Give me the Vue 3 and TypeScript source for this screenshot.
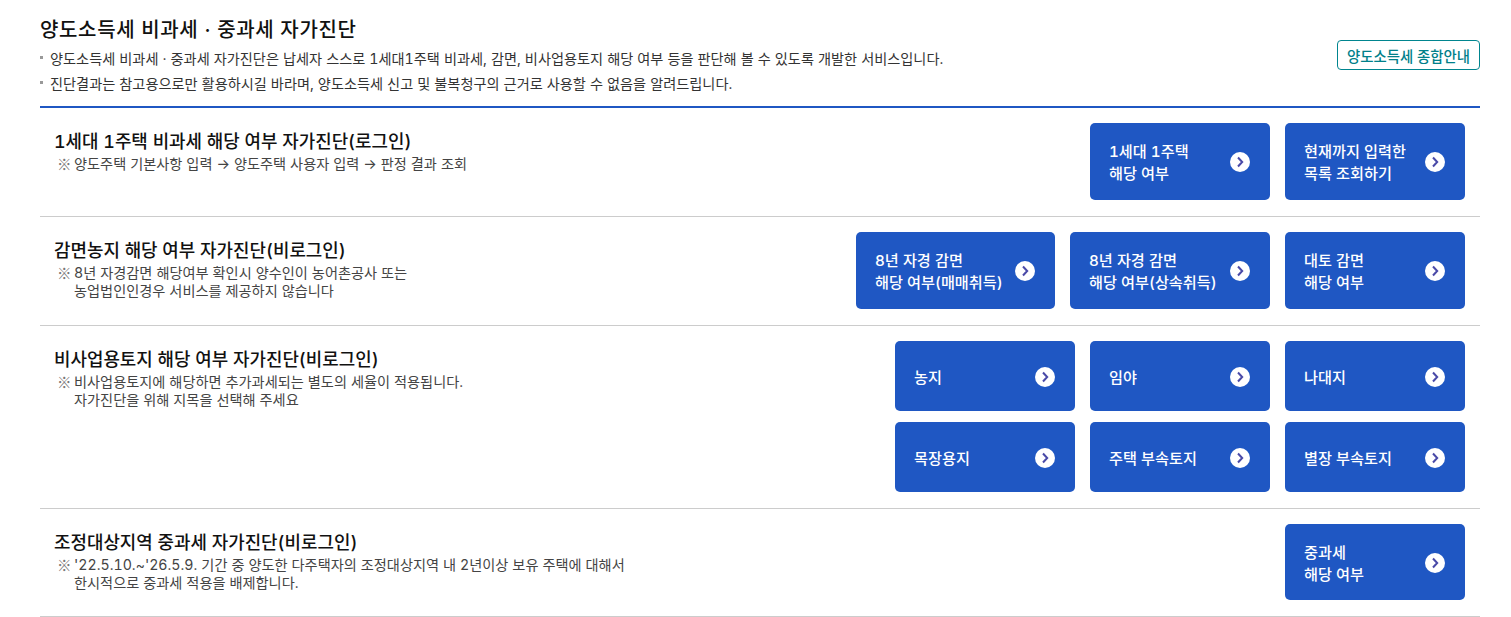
<template>
  <div class="page">
    <header class="head">
      <div class="intro">
        <h1>양도소득세 비과세 · 중과세 자가진단</h1>
        <ul>
          <li v-for="line in notices" :key="line">{{ line }}</li>
        </ul>
      </div>
      <a class="guide">양도소득세 종합안내</a>
    </header>
    <section v-for="sec in sections" :key="sec.title" class="row">
      <div class="info">
        <h2>{{ sec.title }}</h2>
        <p>{{ sec.desc }}</p>
      </div>
      <div class="btns" :class="sec.cls">
        <a v-for="b in sec.buttons" :key="b" class="btn">
          <span>{{ b }}</span>
          <svg width="20" height="20" viewBox="0 0 20 20">
            <circle cx="10" cy="10" r="10" fill="#fff" />
            <path d="M8 5.5 L12.2 10 L8 14.5" fill="none" stroke="#4a4aa8" stroke-width="2" />
          </svg>
        </a>
      </div>
    </section>
  </div>
</template>

<script setup lang="ts">
interface Section {
  title: string;
  desc: string;
  buttons: string[];
  cls?: string;
}

const notices = [
  '양도소득세 비과세 · 중과세 자가진단은 납세자 스스로 1세대1주택 비과세, 감면, 비사업용토지 해당 여부 등을 판단해 볼 수 있도록 개발한 서비스입니다.',
  '진단결과는 참고용으로만 활용하시길 바라며, 양도소득세 신고 및 불복청구의 근거로 사용할 수 없음을 알려드립니다.',
];

const sections: Section[] = [
  {
    title: '1세대 1주택 비과세 해당 여부 자가진단(로그인)',
    desc: '양도주택 기본사항 입력 → 양도주택 사용자 입력 → 판정 결과 조회',
    buttons: ['1세대 1주택\n해당 여부', '현재까지 입력한\n목록 조회하기'],
  },
  {
    title: '감면농지 해당 여부 자가진단(비로그인)',
    desc: '8년 자경감면 해당여부 확인시 양수인이 농어촌공사 또는\n농업법인인경우 서비스를 제공하지 않습니다',
    buttons: ['8년 자경 감면\n해당 여부(매매취득)', '8년 자경 감면\n해당 여부(상속취득)', '대토 감면\n해당 여부'],
    cls: 'wide',
  },
  {
    title: '비사업용토지 해당 여부 자가진단(비로그인)',
    desc: '비사업용토지에 해당하면 추가과세되는 별도의 세율이 적용됩니다.\n자가진단을 위해 지목을 선택해 주세요',
    buttons: ['농지', '임야', '나대지', '목장용지', '주택 부속토지', '별장 부속토지'],
    cls: 'grid',
  },
  {
    title: '조정대상지역 중과세 자가진단(비로그인)',
    desc: "'22.5.10.~'26.5.9. 기간 중 양도한 다주택자의 조정대상지역 내 2년이상 보유 주택에 대해서\n한시적으로 중과세 적용을 배제합니다.",
    buttons: ['중과세\n해당 여부'],
    cls: 'last',
  },
];
</script>

<style>
html, body {
  background: #fff;
}
</style>

<style scoped>
.page {
  width: 1440px;
  margin-left: 40px;
  font-family: Inter, "Noto Sans CJK KR", sans-serif;
  font-feature-settings: "tnum";
  color: #111;
}

.head {
  display: flex;
  justify-content: space-between;
  align-items: center;
  box-sizing: border-box;
  border-bottom: 2px solid #1f57c3;
  height: 108px;
}

.intro {
  align-self: flex-start;
  padding-top: 15px;
}

h1 {
  margin: 0 0 1px;
  font-size: 20px;
  line-height: 30px;
  font-weight: 500;
  letter-spacing: 0.65px;
}

ul {
  margin: 0;
  padding: 0;
  list-style: none;
}

li {
  position: relative;
  padding-left: 10px;
  font-size: 14.2px;
  line-height: 25px;
  word-spacing: 0.2px;
  color: #333;
}

li::before {
  content: "";
  position: absolute;
  left: 0;
  top: 10px;
  width: 3px;
  height: 3px;
  background: #999;
}

.guide {
  display: flex;
  align-items: center;
  justify-content: center;
  width: 143px;
  height: 30px;
  box-sizing: border-box;
  border: 1px solid #00858f;
  border-radius: 4px;
  color: #00808a;
  font-size: 14.4px;
  font-weight: 500;
  margin-top: 4px;
}

.row {
  display: flex;
  justify-content: space-between;
  padding: 15px 15px 16px;
  border-bottom: 1px solid #ccc;
}

h2 {
  margin: 6px 0 0 -1px;
  font-size: 17.9px;
  line-height: 26px;
  font-weight: 500;
}

p {
  position: relative;
  margin: 0;
  padding-left: 19px;
  font-size: 14.2px;
  line-height: 18px;
  word-spacing: 0.15px;
  color: #444;
  white-space: pre-line;
}

p::before {
  content: "※";
  position: absolute;
  left: 2px;
  top: 0;
  font-family: "Noto Sans CJK KR", sans-serif;
  font-size: 14.5px;
  font-weight: 500;
  color: #777;
}

.btns {
  display: flex;
  flex-wrap: wrap;
  justify-content: flex-end;
  gap: 11px 15px;
}

.grid {
  width: 570px;
}

.btn {
  display: flex;
  align-items: center;
  justify-content: space-between;
  width: 180px;
  height: 77px;
  box-sizing: border-box;
  padding: 0 20px 0 19px;
  background: #1f57c3;
  border-radius: 5px;
  color: #fff;
  font-size: 15.2px;
  line-height: 22px;
  font-weight: 500;
  white-space: pre-line;
}

.btn span {
  padding-top: 3px;
}

.wide .btn {
  width: 200px;
}

.wide .btn:first-child {
  width: 199px;
}

.wide .btn:last-child {
  width: 180px;
}

.grid .btn {
  height: 70px;
}

.last .btn {
  height: 76px;
}

.btn svg {
  flex: none;
  margin-top: 1px;
}
</style>
